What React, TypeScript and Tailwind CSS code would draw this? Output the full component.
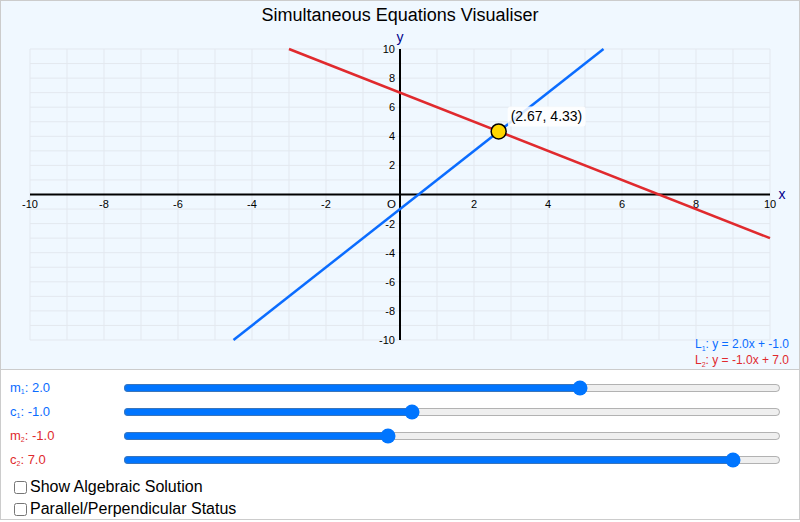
const BLUE = "#0a6cff";
const RED = "#e02a2e";

const X = (x: number) => 400 + 37 * x;
const Y = (y: number) => 194.5 - 14.55 * y;
const range = (a: number, b: number) => Array.from({ length: b - a + 1 }, (_, i) => a + i);

function Graph() {
  const m1 = 2, c1 = -1, m2 = -1, c2 = 7;
  const ix = (c2 - c1) / (m1 - m2);
  const iy = m1 * ix + c1;

  return (
    <svg width={798} height={368} viewBox="1 1 798 368" className="block">
      <text x={400} y={21} textAnchor="middle" fontSize={18} fill="#000">
        Simultaneous Equations Visualiser
      </text>

      {/* grid */}
      {range(-10, 10).map((k) => (
        <line key={"v" + k} x1={X(k)} x2={X(k)} y1={Y(10)} y2={Y(-10)} stroke="#e3e8ef" strokeWidth={1} />
      ))}
      {range(-10, 10).map((k) => (
        <line key={"h" + k} x1={X(-10)} x2={X(10)} y1={Y(k)} y2={Y(k)} stroke="#e3e8ef" strokeWidth={1} />
      ))}

      {/* axes */}
      <line x1={X(-10)} x2={X(10)} y1={Y(0)} y2={Y(0)} stroke="#000" strokeWidth={2} />
      <line x1={X(0)} x2={X(0)} y1={Y(10)} y2={Y(-10)} stroke="#000" strokeWidth={2} />
      <text x={400} y={42} textAnchor="middle" fontSize={14} fill="#00008b">y</text>
      <text x={782} y={199} textAnchor="middle" fontSize={14} fill="#00008b">x</text>

      {/* ticks */}
      {range(-5, 5).map((i) => {
        const k = i * 2;
        if (k === 0) return null;
        return (
          <text key={"xt" + k} x={X(k)} y={207.5} textAnchor="middle" fontSize={11} fill="#000">
            {k}
          </text>
        );
      })}
      {range(-5, 5).map((i) => {
        const k = i * 2;
        if (k === 0) return null;
        return (
          <text key={"yt" + k} x={395} y={Y(k) + 4} textAnchor="end" fontSize={11} fill="#000">
            {k}
          </text>
        );
      })}
      <text x={391.5} y={207.5} textAnchor="middle" fontSize={11.5} fill="#000">O</text>

      {/* lines */}
      <line x1={X(-4.5)} y1={Y(-10)} x2={X(5.5)} y2={Y(10)} stroke={BLUE} strokeWidth={2.5} />
      <line x1={X(-3)} y1={Y(10)} x2={X(10)} y2={Y(-3)} stroke={RED} strokeWidth={2.5} />

      {/* intersection */}
      <circle cx={X(ix)} cy={Y(iy)} r={7.5} fill="#ffd700" stroke="#000" strokeWidth={1.5} />
      <rect x={X(ix) + 9} y={Y(iy) - 25} width={78} height={20} rx={3} fill="#fff" fillOpacity={0.85} />
      <text x={X(ix) + 12} y={Y(iy) - 10} fontSize={14} fill="#000">
        ({ix.toFixed(2)}, {iy.toFixed(2)})
      </text>

      {/* legend */}
      <text x={789} y={348} textAnchor="end" fontSize={12} fill={BLUE}>
        L<tspan fontSize={7} dy={3}>1</tspan>
        <tspan dy={-3}>: y = 2.0x + -1.0</tspan>
      </text>
      <text x={789} y={364} textAnchor="end" fontSize={12} fill={RED}>
        L<tspan fontSize={7} dy={3}>2</tspan>
        <tspan dy={-3}>: y = -1.0x + 7.0</tspan>
      </text>
    </svg>
  );
}

function SliderRow({ name, sub, value, min, max, color }: { name: string; sub: string; value: number; min: number; max: number; color: string }) {
  return (
    <div className="flex h-6 items-center pt-px">
      <label className="w-[113px] text-[13px]" style={{ color }}>
        {name}
        <sub className="text-[7px]">{sub}</sub>: {value.toFixed(1)}
      </label>
      <input type="range" min={min} max={max} step={0.1} defaultValue={value} className="w-[658px]" />
    </div>
  );
}

export default function App() {
  return (
    <div className="h-[520px] w-[800px] border border-[#cccccc] font-['Liberation_Sans',Arial,sans-serif]">
      <div className="h-[369px] border-b border-[#cccccc] bg-[#f0f8ff]">
        <Graph />
      </div>
      <div className="pl-[9px] pt-[5px]">
        <SliderRow name="m" sub="1" value={2} min={-5} max={5} color={BLUE} />
        <SliderRow name="c" sub="1" value={-1} min={-8} max={8} color={BLUE} />
        <SliderRow name="m" sub="2" value={-1} min={-5} max={5} color={RED} />
        <SliderRow name="c" sub="2" value={7} min={-8} max={8} color={RED} />
        <div className="mt-[5px] text-base text-black">
          <label className="flex h-[22px] items-center">
            <input type="checkbox" className="ml-1 mr-[3px]" />
            Show Algebraic Solution
          </label>
          <label className="flex h-[22px] items-center">
            <input type="checkbox" className="ml-1 mr-[3px]" />
            Parallel/Perpendicular Status
          </label>
        </div>
      </div>
    </div>
  );
}
